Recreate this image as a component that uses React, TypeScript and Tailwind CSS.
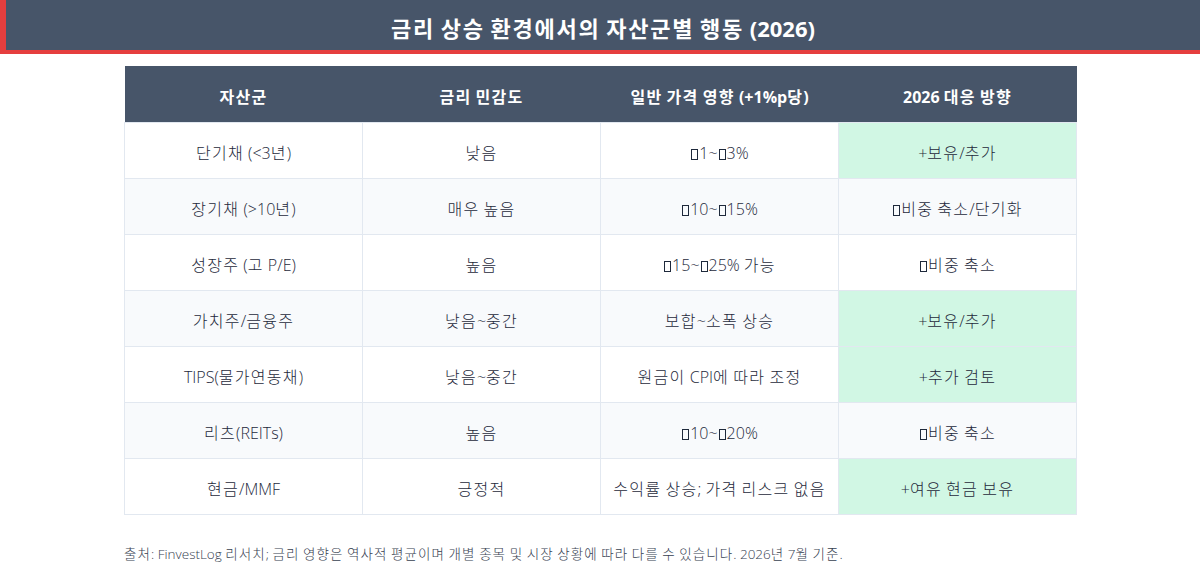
import React from "react";

// Hangul runs are set a little looser than the Latin text around them
function Ko({ children }: { children: string }) {
  const parts = children.split(/([\uAC00-\uD7A3\u3131-\u318E]+)/);
  return (
    <>
      {parts.map((p, i) =>
        i % 2 === 1 ? (
          <span key={i} className="tracking-[0.08em]">
            {p}
          </span>
        ) : (
          <React.Fragment key={i}>{p}</React.Fragment>
        )
      )}
    </>
  );
}

// glyph the source font couldn't draw (shows as an empty box)
function Tofu() {
  return (
    <span className="inline-block w-[7px] h-[11px] border border-current mx-[1px] align-[-1px]" />
  );
}

type Cell = string | React.ReactNode;

type Row = {
  asset: string;
  sensitivity: string;
  impact: Cell;
  action: Cell;
  positive: boolean;
};

const rows: Row[] = [
  {
    asset: "단기채 (<3년)",
    sensitivity: "낮음",
    impact: (
      <>
        <Tofu />1~<Tofu />3%
      </>
    ),
    action: "+보유/추가",
    positive: true,
  },
  {
    asset: "장기채 (>10년)",
    sensitivity: "매우 높음",
    impact: (
      <>
        <Tofu />10~<Tofu />15%
      </>
    ),
    action: (
      <>
        <Tofu />
        <Ko>비중 축소/단기화</Ko>
      </>
    ),
    positive: false,
  },
  {
    asset: "성장주 (고 P/E)",
    sensitivity: "높음",
    impact: (
      <>
        <Tofu />15~<Tofu />25% <Ko>가능</Ko>
      </>
    ),
    action: (
      <>
        <Tofu />
        <Ko>비중 축소</Ko>
      </>
    ),
    positive: false,
  },
  {
    asset: "가치주/금융주",
    sensitivity: "낮음~중간",
    impact: "보합~소폭 상승",
    action: "+보유/추가",
    positive: true,
  },
  {
    asset: "TIPS(물가연동채)",
    sensitivity: "낮음~중간",
    impact: "원금이 CPI에 따라 조정",
    action: "+추가 검토",
    positive: true,
  },
  {
    asset: "리츠(REITs)",
    sensitivity: "높음",
    impact: (
      <>
        <Tofu />10~<Tofu />20%
      </>
    ),
    action: (
      <>
        <Tofu />
        <Ko>비중 축소</Ko>
      </>
    ),
    positive: false,
  },
  {
    asset: "현금/MMF",
    sensitivity: "긍정적",
    impact: "수익률 상승; 가격 리스크 없음",
    action: "+여유 현금 보유",
    positive: true,
  },
];

const headers = ["자산군", "금리 민감도", "일반 가격 영향 (+1%p당)", "2026 대응 방향"];

function render(c: Cell) {
  return typeof c === "string" ? <Ko>{c}</Ko> : c;
}

export default function App() {
  return (
    <div
      className="w-[1200px] h-[570px] bg-white overflow-hidden"
      style={{ fontFamily: '"Open Sans", "Noto Sans CJK KR", sans-serif' }}
    >
      <div className="h-[54px] bg-[#475569] border-l-[6px] border-b-[4px] border-[#e53e3e] flex items-center justify-center pt-[6px]">
        <h1 className="text-white text-[22px] font-bold">
          <Ko>금리 상승 환경에서의 자산군별 행동 (2026)</Ko>
        </h1>
      </div>

      <div className="mx-[124px] mt-[12px] w-[953px]">
        <table className="w-full table-fixed border-collapse text-[16px] font-light text-[#1e293b]">
          <thead>
            <tr className="bg-[#475569] h-[56px]">
              {headers.map((h) => (
                <th key={h} className="text-white font-bold text-[16px] pt-[6px] align-middle">
                  <Ko>{h}</Ko>
                </th>
              ))}
            </tr>
          </thead>
          <tbody>
            {rows.map((r, i) => {
              const stripe = i % 2 === 1 ? "bg-[#f8fafc]" : "bg-white";
              return (
                <tr key={r.asset} className={`h-[56px] ${stripe}`}>
                  <td className="border border-[#e2e8f0] text-center pt-[6px]">{render(r.asset)}</td>
                  <td className="border border-[#e2e8f0] text-center pt-[6px]">{render(r.sensitivity)}</td>
                  <td className="border border-[#e2e8f0] text-center pt-[6px]">{render(r.impact)}</td>
                  <td
                    className={`border border-[#e2e8f0] text-center pt-[6px] ${
                      r.positive ? "bg-[#d1f7e4]" : ""
                    }`}
                  >
                    {render(r.action)}
                  </td>
                </tr>
              );
            })}
          </tbody>
        </table>

        <p className="mt-[29px] text-[13.5px] font-light text-[#374151]">
          <Ko>
            출처: FinvestLog 리서치; 금리 영향은 역사적 평균이며 개별 종목 및 시장 상황에 따라 다를 수 있습니다. 2026년 7월 기준.
          </Ko>
        </p>
      </div>
    </div>
  );
}
